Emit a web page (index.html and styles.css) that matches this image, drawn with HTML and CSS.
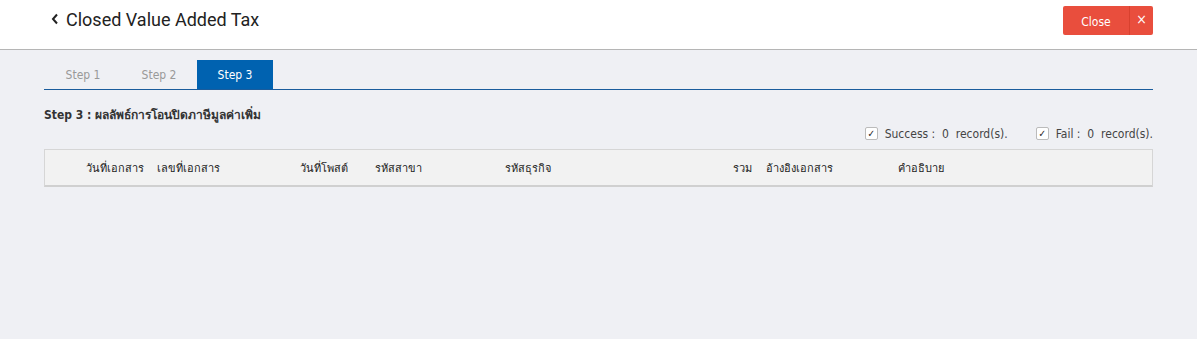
FILE: index.html
```html
<!DOCTYPE html>
<html lang="th">
<head>
    <meta charset="UTF-8">
    <title>Closed Value Added Tax</title>
    <link rel="stylesheet" href="styles.css">
</head>
<body>
    <div class="topbar">
        <div class="title">
            <span class="back">
                <svg width="8" height="12" viewBox="0 0 8 12"><path d="M6 1.5 L2 6 L6 10.5" fill="none" stroke="#222" stroke-width="2"/></svg>
            </span>
            Closed Value Added Tax
        </div>
        <div class="close-group">
            <div class="close-btn">Close</div>
            <div class="close-x">&#215;</div>
        </div>
    </div>

    <div class="content">
        <div class="tabs">
            <div class="tab">Step 1</div>
            <div class="tab">Step 2</div>
            <div class="tab active">Step 3</div>
        </div>

        <div class="step-title">Step 3 : ผลลัพธ์การโอนปิดภาษีมูลค่าเพิ่ม</div>

        <div class="summary">
            <label class="check"><span class="box">&#10003;</span> Success :&nbsp; 0&nbsp; record(s).</label>
            <label class="check"><span class="box">&#10003;</span> Fail :&nbsp; 0&nbsp; record(s).</label>
        </div>

        <div class="table-head">
            <div class="col c-date">วันที่เอกสาร</div>
            <div class="col c-no">เลขที่เอกสาร</div>
            <div class="col c-post">วันที่โพสต์</div>
            <div class="col c-branch">รหัสสาขา</div>
            <div class="col c-biz">รหัสธุรกิจ</div>
            <div class="col c-total">รวม</div>
            <div class="col c-ref">อ้างอิงเอกสาร</div>
            <div class="col c-desc">คำอธิบาย</div>
        </div>
    </div>
</body>
</html>
```

FILE: styles.css
```css
* {
    margin: 0;
    padding: 0;
    box-sizing: border-box;
}

body {
    background-color: #eff0f4;
    font-family: Tahoma, "DejaVu Sans Condensed", "Noto Sans", sans-serif;
    font-size: 12px;
    color: #333;
    height: 339px;
}

.topbar {
    height: 50px;
    background: #fff;
    border-bottom: 1px solid #b5b5b5;
    display: flex;
    justify-content: space-between;
    padding: 6px 44px 0 51px;
}

.title {
    display: flex;
    align-items: center;
    height: 26px;
    gap: 7px;
    font-family: Roboto, sans-serif;
    font-size: 18px;
    color: #222;
}

.back svg {
    display: block;
}

.close-group {
    display: flex;
    height: 29px;
}

.close-btn, .close-x {
    background: #e94e3d;
    color: #fff;
    display: flex;
    justify-content: center;
}

.close-btn {
    width: 66px;
    align-items: center;
    font-size: 12px;
    padding-top: 2px;
    border-radius: 2px 0 0 2px;
}

.close-x {
    width: 24px;
    border-left: 1px solid #d8412f;
    border-radius: 0 2px 2px 0;
    font-size: 14px;
    line-height: 14px;
    padding-top: 6px;
}

.content {
    padding: 10px 44px 0 44px;
}

.tabs {
    display: flex;
    border-bottom: 1px solid #1a5c9c;
    height: 30px;
    padding-left: 1px;
}

.tab {
    width: 76px;
    display: flex;
    align-items: center;
    justify-content: center;
    color: #999;
}

.active {
    background: #0062b0;
    color: #fff;
}

.step-title {
    margin-top: 15px;
    font-weight: bold;
    color: #333;
    height: 16px;
}

.summary {
    display: flex;
    justify-content: flex-end;
    gap: 28px;
    margin-top: 4px;
    height: 17px;
}

.check {
    display: flex;
    align-items: center;
    gap: 7px;
    color: #444;
}

.box {
    width: 13px;
    height: 13px;
    background: #fff;
    border: 1px solid #bbb;
    border-radius: 2px;
    font-size: 10px;
    line-height: 11px;
    text-align: center;
    color: #222;
    font-weight: bold;
}

.table-head {
    margin-top: 7px;
    height: 38px;
    background: #f2f2f2;
    border: 1px solid #d6d6d6;
    border-bottom: 2px solid #d0d0d0;
    display: flex;
    align-items: center;
    padding-left: 41px;
    color: #222;
    font-size: 11px;
}

.col {
    flex: none;
}

.c-date { width: 71px; }
.c-no { width: 143px; }
.c-post { width: 75px; }
.c-branch { width: 130px; }
.c-biz { width: 228px; }
.c-total { width: 33px; }
.c-ref { width: 132px; }
.c-desc { width: 100px; }
```
